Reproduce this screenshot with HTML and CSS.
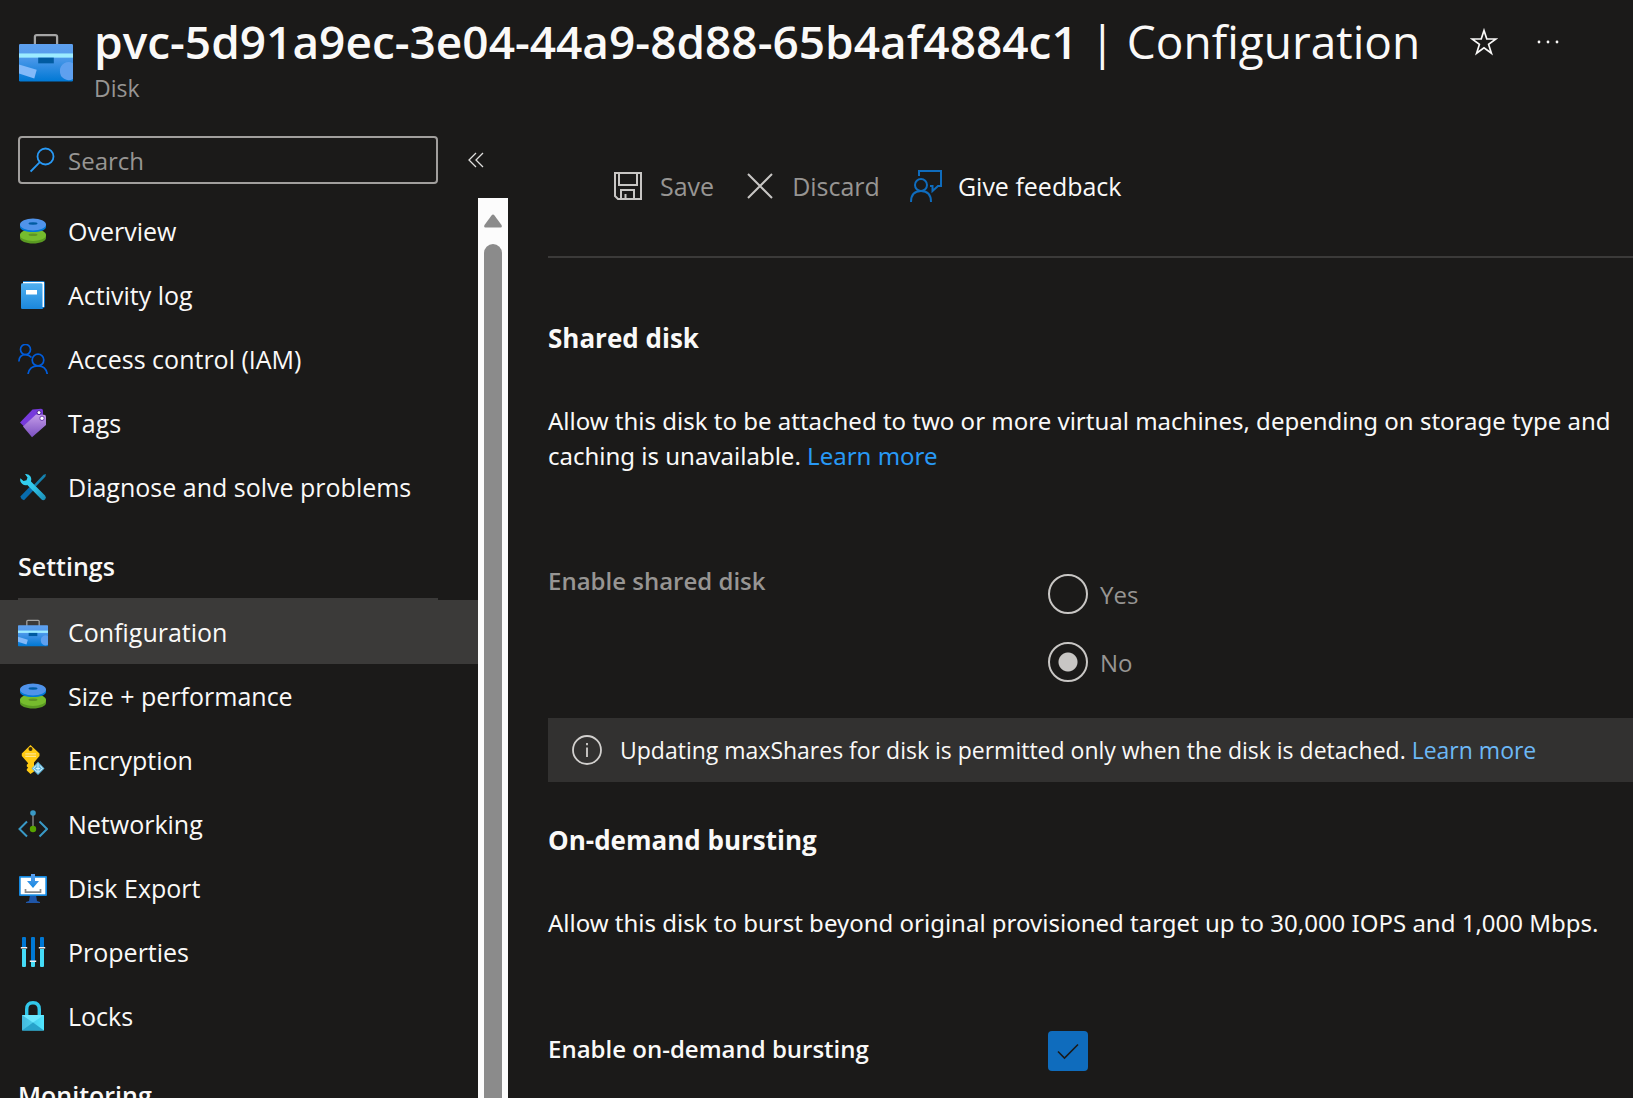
FILE: index.html
```html
<!DOCTYPE html>
<html lang="en">
<head>
<meta charset="utf-8">
<meta name="viewport" content="width=device-width, initial-scale=1">
<title>Disk | Configuration</title>
<link rel="stylesheet" href="styles.css">
</head>
<body>
<svg class="defs" aria-hidden="true">
  <defs>
    <linearGradient id="g-case" x1="0" y1="0" x2="0" y2="1"><stop offset="0" stop-color="#5ea0ef"/><stop offset=".3" stop-color="#559cec"/><stop offset="1" stop-color="#0078d4"/></linearGradient>
    <linearGradient id="g-book" x1="0" y1="0" x2="0" y2="1"><stop offset="0" stop-color="#50b0f0"/><stop offset="1" stop-color="#1b87dc"/></linearGradient>
    <linearGradient id="g-tag" x1="0" y1="0" x2="0" y2="1"><stop offset="0" stop-color="#c39be8"/><stop offset="1" stop-color="#7a4fc0"/></linearGradient>
    <linearGradient id="g-wrench" x1="0" y1="0" x2="1" y2="1"><stop offset="0" stop-color="#32d4f5"/><stop offset=".5" stop-color="#32c8ea"/><stop offset="1" stop-color="#198ab3"/></linearGradient>
    <linearGradient id="g-lock" x1="0" y1="0" x2="1" y2="0"><stop offset="0" stop-color="#44b8dc"/><stop offset="1" stop-color="#50e6ff"/></linearGradient>
    <linearGradient id="g-arrow" x1="0" y1="0" x2="0" y2="1"><stop offset="0" stop-color="#5ea0ef"/><stop offset="1" stop-color="#1488e0"/></linearGradient>
    <symbol id="i-case" viewBox="0 0 36 36">
      <path d="M10.600 11V5.200Q10.600 4 11.800 4H24.200Q25.400 4 25.400 5.200V11" fill="none" stroke="#a5a5a5" stroke-width="1.500"/>
      <rect x="0" y="10" width="36" height="25" rx=".8" fill="url(#g-case)"/>
      <rect y="16.300" width="36" height="2.800" fill="#9cebff"/>
      <rect x="12.800" y="19.100" width="10.400" height="3.800" fill="#005ba1"/>
      <path d="M0 23.700L11.800 27.200L10.200 33L0 29.700Z" fill="#83b9f9"/>
      <path d="M36 22.800A5.800 5.800 0 0 0 27.300 28A5.800 5.800 0 0 0 36 33.300Z" fill="#5ea0ef"/>
    </symbol>
    <symbol id="i-disks" viewBox="0 0 30 30">
      <path d="M2 18.500V22C2 25 8 27.500 15 27.500S28 25 28 22V18.500Z" fill="#5a9a22"/>
      <ellipse cx="15" cy="19" rx="13" ry="6" fill="#76bc2d"/>
      <ellipse cx="15" cy="18.800" rx="4.500" ry="1.200" fill="#5e9624"/>
      <path d="M2 8V11C2 14 8 16 15 16S28 14 28 11V8Z" fill="#0078d4"/>
      <ellipse cx="15" cy="8.400" rx="13" ry="6" fill="#5093ea"/>
      <ellipse cx="15" cy="7.500" rx="4.500" ry="1.200" fill="#005ba1"/>
    </symbol>
    <symbol id="i-book" viewBox="0 0 30 30">
      <path d="M5 1H25Q27 1 27 3V27L24 29H5Z" fill="#1478c8"/>
      <path d="M5 2H26V27H22V5H5Z" fill="#fff"/>
      <path d="M3 4.500Q3 3.300 4.300 3.300H23.200Q24.500 3.300 24.500 4.600V29H4.300Q3 29 3 27.700Z" fill="url(#g-book)"/>
      <rect x="8" y="10" width="11" height="4.500" fill="#fff"/>
    </symbol>
    <symbol id="i-people" viewBox="0 0 30 30">
      <g fill="none" stroke="#015cda" stroke-width="1.700"><circle cx="7.500" cy="5.500" r="5"/><circle cx="20" cy="16" r="5.800"/><path d="M.9 17.500Q1.200 10.700 7.500 10.700Q11 10.700 13.500 13.500M10 30Q11.500 21.800 20 21.800Q28 21.800 29.200 30"/></g>
    </symbol>
    <symbol id="i-tag" viewBox="0 0 30 30">
      <path d="M2 14.500L14.500 1.500L23 .7Q25 .7 25 2.700V9L8.500 21Z" fill="#773adc"/>
      <path d="M5 18.500L18 6.500L26 6.800Q28 6.800 28 9V17L14 29.300Z" fill="url(#g-tag)"/>
      <circle cx="21" cy="4.600" r="2" fill="#fff" stroke="#4d248f"/><circle cx="24" cy="10.300" r="2.200" fill="#fff" stroke="#6b39af"/>
    </symbol>
    <symbol id="i-tools" viewBox="0 0 30 30">
      <path d="M28 2L25.500 2.800L16 12.800L17.800 14.500L27.300 4.700Z" fill="#1581ae"/><path d="M12 14.500L2.300 24.500Q3 27.500 6 28.300L15.500 18.300Z" fill="#086cae"/>
      <path d="M7 2Q11 1.500 12.700 4.700Q13.800 7 13 9.500L27 23.500Q28.800 25.500 27.200 27.300Q25.300 29 23.300 27.300L9.300 13Q6.500 13.700 4.300 12Q1.600 10 2.300 6.300L5.500 9L8.500 8.300L9.500 5.400Z" fill="url(#g-wrench)"/>
    </symbol>
    <symbol id="i-key" viewBox="0 0 30 30">
      <path d="M12.500 0L21.500 8.500V11L16 17.500V26.500L12.500 29L8.800 25.600V24L10.200 22.700L8.800 21.400V19.800L10.200 18.500L9.500 17.500L3.800 11V8.500Z" fill="#ffca12"/>
      <circle cx="12.500" cy="4" r="2" fill="#3a2c10"/><path d="M7.300 8.800H18M7.300 11.300H18" stroke="#ffe48a" stroke-width="1.300"/>
      <path d="M20 16.800L26.500 23.500L20 30L13.500 23.500Z" fill="#66b8dc"/><path d="M20 18.500V27M18 20.500L15.500 23.500L20 27.500M22 20.500L24.500 23.500L20 27.500M18 23.500H22" fill="none" stroke="#d5f2ff"/>
    </symbol>
    <symbol id="i-network" viewBox="0 0 30 30">
      <path d="M15 4V20" stroke="#7a7a7a" stroke-width="1.600"/><circle cx="15" cy="4" r="2.800" fill="#3999c6"/><circle cx="15" cy="20" r="3.200" fill="#57a300"/>
      <path d="M9 12.500L1.500 20L9 27.500M21.500 12.500L29 20L21.500 27.500" fill="none" stroke="#3999c6" stroke-width="2"/>
    </symbol>
    <symbol id="i-export" viewBox="0 0 30 30">
      <path d="M12 22H18L19 28L22 29V30H8V29L11 28Z" fill="#1f56a8"/><rect x="1" y="3" width="28" height="20" rx="1" fill="#1488e0"/><rect x="2.700" y="4.700" width="24.600" height="16.600" fill="#fff"/>
      <path d="M7.500 16V19.200H22.500V16" fill="none" stroke="#8a8a8a" stroke-width="1.700"/><path d="M13 1H17V8H21L15 15L9 8H13Z" fill="url(#g-arrow)"/>
    </symbol>
    <symbol id="i-props" viewBox="0 0 30 30">
      <path d="M4 1Q4 0 5 0H7Q8 0 8 1V11H4ZM13 1Q13 0 14 0H16Q17 0 17 1V24H13ZM22 1Q22 0 23 0H25Q26 0 26 1V11H22Z" fill="#0078d4"/>
      <path d="M4 12H8V29Q8 30 7 30H5Q4 30 4 29ZM13 25H17V29Q17 30 16 30H14Q13 30 13 29ZM22 12H26V29Q26 30 25 30H23Q22 30 22 29Z" fill="#45dcf7"/>
      <path d="M2.800 10.700H9.200M11.800 24.300H18.200M20.800 10.700H27.200" stroke="#f2f2f2" stroke-width="1.600"/>
    </symbol>
    <symbol id="i-lock" viewBox="0 0 30 30">
      <path d="M8.700 15V8.500Q8.700 1.700 15 1.700T21.300 8.500V15" fill="none" stroke="#32c8ea" stroke-width="3.400"/>
      <path d="M4 14H26V29Q26 29.500 25.500 29.500H4.500Q4 29.500 4 29Z" fill="url(#g-lock)"/><path d="M4 14H26L15 21.500Z" fill="#6ce8ff"/><path d="M4 29.500L15 21.500L26 29.500Z" fill="#27a3cb"/>
    </symbol>
  </defs>
</svg>

<header class="header">
  <svg class="header-icon"><use href="#i-case"/></svg>
  <div class="header-text">
    <div class="title-row">
      <h1><strong>pvc-5d91a9ec-3e04-44a9-8d88-65b4af4884c1</strong> | Configuration</h1>
      <div class="title-actions">
        <button type="button" class="plain" aria-label="Add to favorites"><svg width="28" height="28" viewBox="0 0 28 28"><path d="M14 2.500L16.800 11H26L18.600 16.400L21.400 25.300L14 19.800L6.600 25.300L9.400 16.400L2 11H11.200Z" fill="none" stroke="#faf9f8" stroke-width="1.700"/></svg></button>
        <button type="button" class="plain" aria-label="More options"><svg width="28" height="28" viewBox="0 0 28 28" fill="#faf9f8"><circle cx="5" cy="14" r="1.400"/><circle cx="14" cy="14" r="1.400"/><circle cx="23" cy="14" r="1.400"/></svg></button>
      </div>
    </div>
    <p class="subtitle">Disk</p>
  </div>
</header>

<div class="layout">
  <aside class="sidebar">
    <div class="search-row">
      <label class="search">
        <svg width="26" height="26" viewBox="0 0 26 26" fill="none" stroke="#2899f5" stroke-width="1.800"><circle cx="15.500" cy="9.500" r="8"/><path d="M9.800 15.200L.6 24.500"/></svg>
        <input type="text" placeholder="Search" aria-label="Search">
      </label>
      <button type="button" class="plain" aria-label="Collapse menu"><svg width="18" height="18" viewBox="0 0 18 18" fill="none" stroke="#e0dfde" stroke-width="1.300"><path d="M9 2L2 9L9 16M16 2L9 9L16 16"/></svg></button>
    </div>
    <div class="nav-area">
      <nav class="nav">
        <a href="#"><svg><use href="#i-disks"/></svg>Overview</a>
        <a href="#"><svg><use href="#i-book"/></svg>Activity log</a>
        <a href="#"><svg><use href="#i-people"/></svg>Access control (IAM)</a>
        <a href="#"><svg><use href="#i-tag"/></svg>Tags</a>
        <a href="#"><svg><use href="#i-tools"/></svg>Diagnose and solve problems</a>
        <h2>Settings</h2>
        <a href="#" class="active" aria-current="page"><svg><use href="#i-case"/></svg>Configuration</a>
        <a href="#"><svg><use href="#i-disks"/></svg>Size + performance</a>
        <a href="#"><svg><use href="#i-key"/></svg>Encryption</a>
        <a href="#"><svg><use href="#i-network"/></svg>Networking</a>
        <a href="#"><svg><use href="#i-export"/></svg>Disk Export</a>
        <a href="#"><svg><use href="#i-props"/></svg>Properties</a>
        <a href="#"><svg><use href="#i-lock"/></svg>Locks</a>
        <h2>Monitoring</h2>
      </nav>
      <div class="scrollbar" aria-hidden="true">
        <svg width="20" height="14" viewBox="0 0 20 14"><path d="M8.500 1.500Q10 -.5 11.500 1.500L18.500 11Q19.500 13.500 17.500 13.500H2.500Q.5 13.500 1.500 11Z" fill="#8b8b8b"/></svg>
        <div class="thumb"></div>
      </div>
    </div>
  </aside>

  <main class="main">
    <div class="toolbar">
      <button type="button" disabled><svg width="32" height="32" viewBox="0 0 32 32" fill="none" stroke="#c8c6c4" stroke-width="2"><path d="M3 3H29V29H6L3 26ZM7 3V15H25V3M9 29V20H22V29M13.500 29V24"/></svg>Save</button>
      <button type="button" disabled><svg width="32" height="32" viewBox="0 0 32 32" fill="none" stroke="#c8c6c4" stroke-width="2"><path d="M4 4L28 28M28 4L4 28"/></svg>Discard</button>
      <button type="button"><svg width="32" height="32" viewBox="0 0 32 32" fill="none" stroke="#0f6cbd" stroke-width="2"><circle cx="11" cy="15" r="6"/><path d="M1 32Q1 21 11 21T21 32M9 6V1H31V16H28L22.500 21V16H20"/></svg>Give feedback</button>
    </div>

    <section class="shared">
      <h2>Shared disk</h2>
      <p>Allow this disk to be attached to two or more virtual machines, depending on storage type and<br>caching is unavailable. <a href="#">Learn more</a></p>
      <div class="field" role="radiogroup" aria-labelledby="shared-label">
        <span id="shared-label" class="label muted">Enable shared disk</span>
        <div class="options">
          <label><input type="radio" name="shared" disabled>Yes</label>
          <label><input type="radio" name="shared" checked disabled>No</label>
        </div>
      </div>
      <div class="notice">
        <svg width="30" height="30" viewBox="0 0 30 30" fill="none" stroke="#d2d0ce" stroke-width="1.800"><circle cx="15" cy="15" r="14"/><path d="M15 12.500V22M15 8V10.200"/></svg>
        <span>Updating maxShares for disk is permitted only when the disk is detached. <a href="#">Learn more</a></span>
      </div>
    </section>

    <section class="bursting">
      <h2>On-demand bursting</h2>
      <p>Allow this disk to burst beyond original provisioned target up to 30,000 IOPS and 1,000 Mbps.</p>
      <div class="field">
        <label class="label" for="burst">Enable on-demand bursting</label>
        <span class="check"><input type="checkbox" id="burst" checked><svg width="40" height="40" viewBox="0 0 40 40" fill="none" stroke="#1b1a19" stroke-width="1.600"><path d="M10 20.500L16.500 27L30 13.500"/></svg></span>
      </div>
    </section>
  </main>
</div>
</body>
</html>
```
FILE: styles.css
```css
* { box-sizing: border-box; }
body {
  margin: 0;
  height: 100vh;
  display: flex;
  flex-direction: column;
  overflow: hidden;
  background: #1b1a19;
  color: #faf9f8;
  font: 24px/35px "Open Sans", "Noto Sans", sans-serif;
}
h1, h2, p { margin: 0; }
a { color: #2899f5; text-decoration: none; }
button, input { font: inherit; color: inherit; }
button { background: none; border: 0; padding: 0; }
svg { flex: none; display: block; }
.defs { position: absolute; width: 0; height: 0; }
.plain { display: flex; }

.header { display: flex; flex: none; height: 120px; padding-left: 19px; }
.header-icon { width: 54px; height: 54px; margin-top: 29px; }
.header-text { flex: 1; min-width: 0; padding: 10px 0 0 21px; }
.title-row { display: flex; align-items: center; gap: 50px; white-space: nowrap; }
h1 { font-size: 46px; line-height: 62px; font-weight: 400; }
h1 strong { font-weight: 600; }
.title-actions { display: flex; gap: 36px; padding-top: 2px; }
.subtitle { font-size: 23px; line-height: 32px; color: #979593; }

.layout { display: flex; flex: 1; min-height: 0; }
.sidebar { display: flex; flex-direction: column; flex: none; width: 508px; }
.search-row { display: flex; align-items: center; gap: 29px; padding: 16px 0 14px 18px; }
.search {
  display: flex;
  align-items: center;
  width: 420px;
  height: 48px;
  padding-left: 10px;
  gap: 12px;
  border: 2px solid #a19f9d;
  border-radius: 4px;
}
.search input { flex: 1; min-width: 0; padding: 0; border: 0; outline: 0; background: none; }
.search input::placeholder { color: #979593; opacity: 1; }
.nav-area { display: flex; flex: 1; min-height: 0; }
.nav { flex: 1; padding-top: 1px; overflow: hidden; font-size: 25px; }
.nav a { display: flex; align-items: center; gap: 20px; height: 64px; padding: 0 18px; color: inherit; }
.nav a svg { width: 30px; height: 30px; }
.nav .active { background: #3b3a39; }
.nav h2 {
  height: 81px;
  margin: 0 40px 0 18px;
  padding-top: 30px;
  border-bottom: 2px solid #3b3a39;
  font-size: 25px;
  font-weight: 600;
}
.scrollbar { display: flex; flex-direction: column; align-items: center; gap: 16px; width: 30px; padding-top: 16px; background: #fcfcfc; }
.thumb { flex: 1; width: 18px; border-radius: 9px 9px 0 0; background: #8b8b8b; }

.main { flex: 1; min-width: 0; padding-left: 40px; white-space: nowrap; overflow: hidden; }
.toolbar { display: flex; align-items: center; gap: 30px; height: 138px; padding: 0 0 4px 64px; border-bottom: 2px solid #3b3a39; font-size: 25px; }
.toolbar button { display: flex; align-items: center; gap: 16px; }
.toolbar button:disabled { color: #979593; }
.main h2 { font-size: 26px; font-weight: 700; line-height: 36px; }
.shared { padding-top: 62px; }
.main p { margin-top: 47px; font-family: "Noto Sans", "Open Sans", sans-serif; }
.field { display: flex; }
.shared .field { margin-top: 90px; }
.label { width: 500px; font-weight: 600; }
.muted { color: #979593; }
.options { display: flex; flex-direction: column; gap: 28px; padding-top: 11px; color: #979593; }
.options label { display: flex; align-items: center; gap: 12px; height: 40px; }
.options input {
  appearance: none;
  width: 40px;
  height: 40px;
  margin: 0;
  border: 2px solid #c8c6c4;
  border-radius: 50%;
}
.options input:checked { background: radial-gradient(circle, #c8c6c4 9px, transparent 10px); }
.notice { display: flex; align-items: center; gap: 18px; height: 64px; margin-top: 36px; padding-left: 24px; background: #323130; font-size: 23px; }
.notice a { color: #6cb8f6; }
.bursting { padding-top: 40px; }
.bursting .field { margin-top: 91px; }
.check { display: grid; }
.check > * { grid-area: 1 / 1; }
.check input { appearance: none; width: 40px; height: 40px; margin: 0; border-radius: 4px; background: #0f6cbd; }
.check svg { pointer-events: none; }
```
